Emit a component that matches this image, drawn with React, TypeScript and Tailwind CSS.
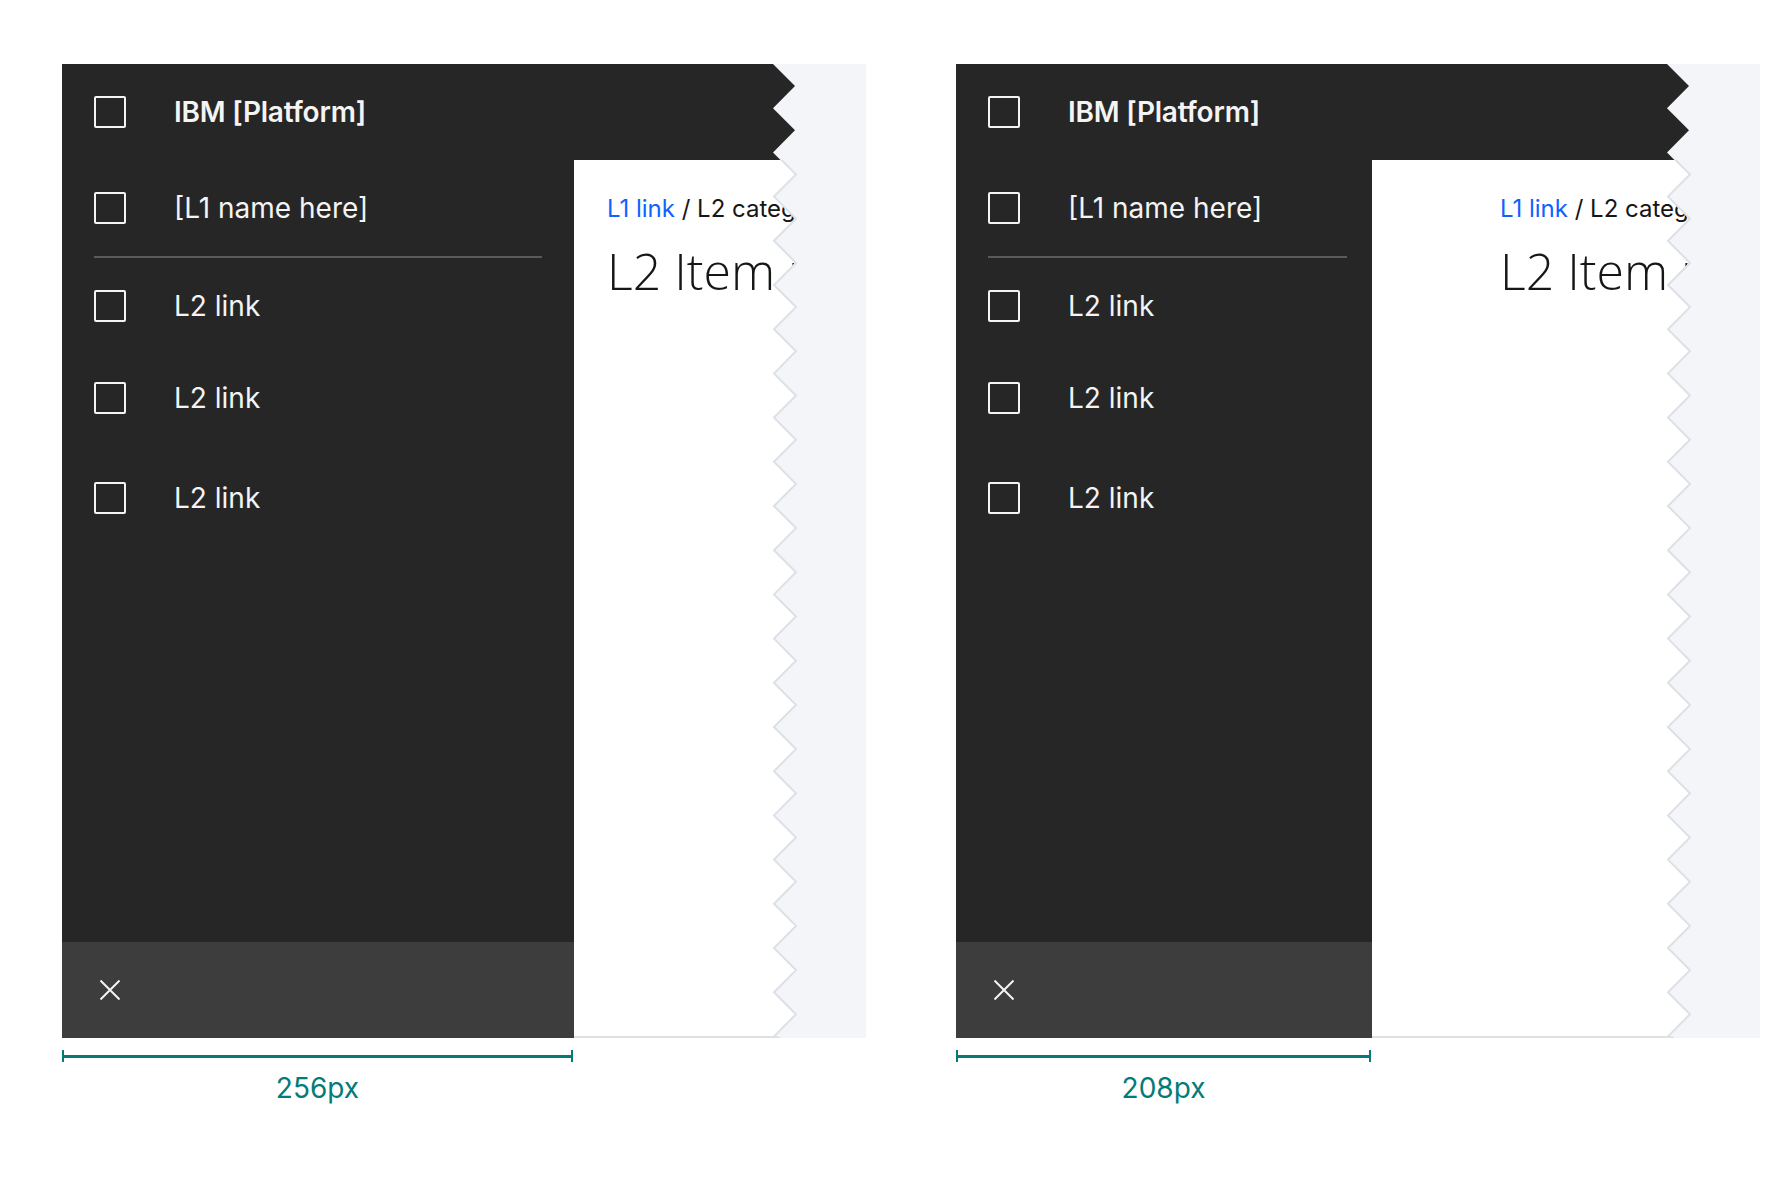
import React from 'react';

const FRAME_H = 974;
const TOOTH = 44.2;
const VALLEY = 711;
const PEAK = 733;

// torn right edge of the screen mock
const zigzag = () => {
  const pts: [number, number][] = [[VALLEY, 0]];
  let i = 0;
  for (let y = TOOTH / 2; y < FRAME_H; y += TOOTH / 2) {
    pts.push([i % 2 === 0 ? PEAK : VALLEY, y]);
    i++;
  }
  pts.push([VALLEY + 6, FRAME_H]);
  return pts;
};

const EDGE = zigzag();
const CLIP = `polygon(0px 0px, ${EDGE.map(([x, y]) => `${x}px ${y}px`).join(', ')}, 0px ${FRAME_H}px)`;

const font = { fontFamily: 'Inter, "Noto Sans", sans-serif' };

const Checkbox = () => <div className="w-8 h-8 shrink-0 border-2 border-[#f4f4f4] rounded-[2px]" />;

const NavRow = ({ label, className }: { label: string; className: string }) => (
  <div className={`flex items-center h-16 pl-8 ${className}`}>
    <Checkbox />
    <span className="ml-12 text-[28px] leading-[32px] text-[#f4f4f4]">{label}</span>
  </div>
);

interface FrameProps {
  sidebar: string;
  contentPad: string;
  dividerEnd: string;
  measure: string;
  label: string;
}

const Frame = ({ sidebar, contentPad, dividerEnd, measure, label }: FrameProps) => (
  <div className="flex flex-col">
    <div className="relative w-[804px] h-[974px] bg-[#f4f5f8]">
      <div className="flex flex-col w-[733px] h-full" style={{ clipPath: CLIP }}>
        {/* Header */}
        <div className="flex items-center h-24 pl-8 bg-[#262626] shrink-0">
          <Checkbox />
          <span className="ml-12 text-[28px] leading-[32px] font-semibold text-[#f4f4f4] tracking-[-0.2px]">IBM [Platform]</span>
        </div>
        <div className="flex flex-1 min-h-0">
          {/* Side nav */}
          <div className={`flex flex-col bg-[#262626] ${sidebar}`}>
            <div className="flex items-center h-24 pl-8">
              <Checkbox />
              <span className="ml-12 text-[28px] leading-[32px] text-[#f4f4f4]">[L1 name here]</span>
            </div>
            <div className={`h-[2px] bg-[#5a5a5a] ml-8 ${dividerEnd}`} />
            <NavRow label="L2 link" className="mt-[16px]" />
            <NavRow label="L2 link" className="mt-[28px]" />
            <NavRow label="L2 link" className="mt-[36px]" />
            <div className="flex-1" />
            <div className="flex items-center h-24 pl-[38px] bg-[#3d3d3d]">
              <svg width="20" height="20" viewBox="0 0 20 20">
                <path d="M0.5 0.5 L19.5 19.5 M19.5 0.5 L0.5 19.5" stroke="#f4f4f4" strokeWidth="2" />
              </svg>
            </div>
          </div>
          {/* Page content */}
          <div className={`flex-1 bg-white border-b-2 border-[#dde1e6] overflow-hidden whitespace-nowrap pt-[37px] ${contentPad}`}>
            <div className="text-[24px] leading-[24px] text-[#161616]">
              <span className="text-[#0f62fe]">L1 link</span> / L2 category
            </div>
            <div
              className="mt-[25px] text-[50px] leading-[50px] font-light text-[#161616]"
              style={{ fontFamily: '"Open Sans", Inter, sans-serif' }}
            >
              L2 Item name
            </div>
          </div>
        </div>
      </div>
      <svg className="absolute top-[96px] left-0" width="804" height={FRAME_H - 96}>
        <polyline
          points={EDGE.map(([x, y]) => `${x + 1},${y - 96}`).join(' ')}
          fill="none"
          stroke="#dde1e6"
          strokeWidth="2"
        />
      </svg>
    </div>
    {/* Width annotation */}
    <div className={`flex flex-col ${measure}`}>
      <div className="relative h-3 mt-3 flex items-center">
        <div className="absolute left-0 top-0 w-[2px] h-3 bg-[#047b77]" />
        <div className="w-full h-[3px] bg-[#047b77]" />
        <div className="absolute right-0 top-0 w-[2px] h-3 bg-[#047b77]" />
      </div>
      <div className="mt-3 text-center text-[28px] leading-[28px] text-[#047b77]">{label}</div>
    </div>
  </div>
);

export default function App() {
  return (
    <div className="w-[1788px] h-[1178px] bg-white flex gap-[90px] pt-[64px] pl-[62px]" style={font}>
      <Frame sidebar="w-[512px]" contentPad="pl-[33px]" dividerEnd="mr-8" measure="w-[511px]" label="256px" />
      <Frame sidebar="w-[416px]" contentPad="pl-[128px]" dividerEnd="mr-[25px]" measure="w-[415px]" label="208px" />
    </div>
  );
}
